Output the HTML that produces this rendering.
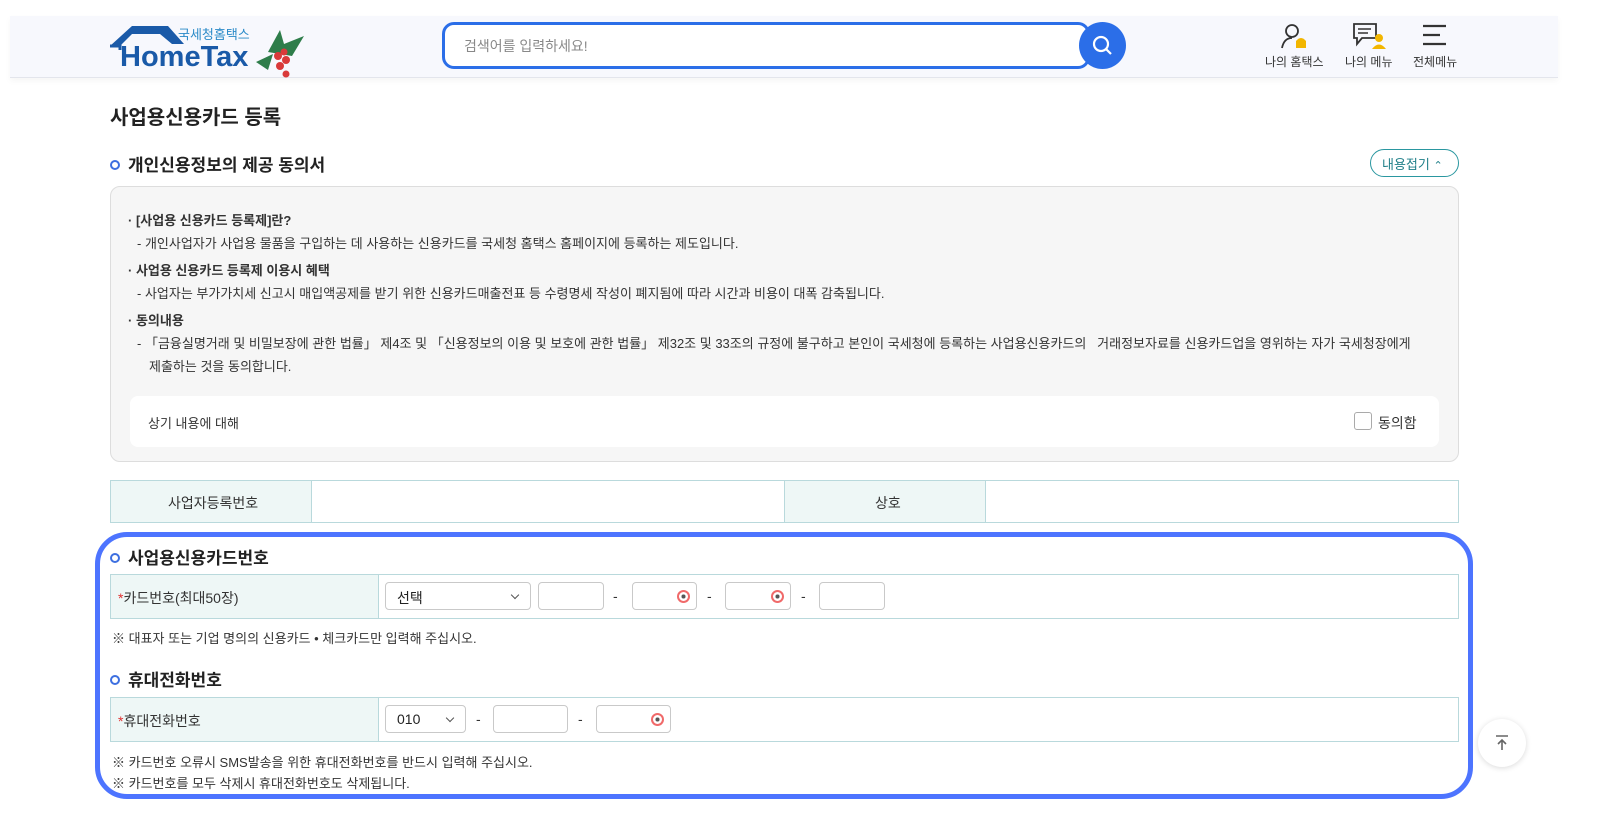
<!DOCTYPE html>
<html><head><meta charset="utf-8">
<style>
*{box-sizing:border-box;margin:0;padding:0}
body{width:1600px;height:830px;background:#fff;font-family:"Liberation Sans","Noto Sans CJK KR",sans-serif;color:#222;position:relative;overflow:hidden}
.a{position:absolute}
.hdr{left:10px;top:16px;width:1548px;height:62px;background:#f7f8fd;border-bottom:1px solid #e3e5ec;box-shadow:0 3px 6px rgba(0,0,0,.04)}
.t{font-size:13px;color:#333;white-space:nowrap}
.b{font-weight:bold}
.inp{position:absolute;height:28px;border:1px solid #c9c9c9;border-radius:4px;background:#fff}
.eye{position:absolute;right:6px;top:7px;width:13px;height:13px;border:2px solid #f06a6a;border-radius:50%;background:radial-gradient(#555 30%,transparent 35%)}
.sel{font-size:14px;padding:5px 0 0 11px}
.sel:after{content:"";position:absolute;right:12px;top:9px;width:5px;height:5px;border-right:1px solid #555;border-bottom:1px solid #555;transform:rotate(45deg)}
.dash{position:absolute;font-size:14px;color:#333}
.bullet{display:inline-block;width:10px;height:10px;border:2.5px solid #3d6fe0;border-radius:50%;margin-right:8px;vertical-align:1px}
</style></head><body>
<div class="a hdr"></div>
<svg class="a" style="left:108px;top:22px" width="200" height="56" viewBox="0 0 200 56">
<path d="M2 24 L24 4 L60 4 L76 22 L64 22 L52 12 L24 12 L12 24 Z" fill="#1a5aa8"/>
<path d="M2 24 L12 24 L12 28" stroke="#1a5aa8" stroke-width="3" fill="none"/>
<text x="12" y="44" font-family="Liberation Sans" font-weight="bold" font-size="29" fill="#1a5aa8">HomeTax</text>
<text x="70" y="17" font-family="Noto Sans CJK KR" font-size="13" fill="#2a8ac8">국세청홈택스</text>
<path d="M160 30 L172 8 L176 22 L196 14 L184 34 Z" fill="#2e7d4a"/>
<path d="M148 40 L165 32 L160 48 Z" fill="#2e7d4a"/>
<circle cx="170" cy="34" r="4" fill="#d93a3a"/><circle cx="178" cy="38" r="4" fill="#d93a3a"/><circle cx="176" cy="30" r="3.5" fill="#d93a3a"/><circle cx="172" cy="44" r="4" fill="#d93a3a"/><circle cx="178" cy="52" r="3.5" fill="#d93a3a"/>
</svg>
<div class="a" style="left:442px;top:22px;width:648px;height:47px;border:3px solid #2b6ee8;border-radius:12px;background:#fff"></div>
<div class="a t" style="left:464px;top:36px;font-size:14px;color:#888">검색어를 입력하세요!</div>
<div class="a" style="left:1079px;top:22px;width:47px;height:47px;border-radius:50%;background:#2b6ee8"></div>
<svg class="a" style="left:1091px;top:34px" width="24" height="24"><circle cx="10" cy="10" r="7" stroke="#fff" stroke-width="2.2" fill="none"/><path d="M15 15 L20 20" stroke="#fff" stroke-width="2.2"/></svg>
<svg class="a" style="left:1280px;top:22px" width="32" height="28"><circle cx="12" cy="9" r="6" stroke="#333" stroke-width="1.8" fill="none"/><path d="M2 26 Q4 16 12 16" stroke="#333" stroke-width="1.8" fill="none"/><path d="M16 26 L16 19 Q21 13 26 19 L26 26 Z" fill="#f2b600"/></svg>
<svg class="a" style="left:1352px;top:22px" width="36" height="28"><path d="M2 2 H24 V16 H10 L5 22 V16 H2 Z" stroke="#333" stroke-width="1.8" fill="none"/><path d="M6 7H19M6 11H16" stroke="#333" stroke-width="1.5"/><circle cx="27" cy="16" r="4" fill="#f2b600"/><path d="M20 27 Q27 18 34 27Z" fill="#f2b600"/></svg>
<svg class="a" style="left:1422px;top:24px" width="26" height="22"><path d="M1 2H24M1 11H18M1 20H24" stroke="#333" stroke-width="2.2"/></svg>
<div class="a t" style="left:1265px;top:53px;font-size:12px">나의 홈택스</div>
<div class="a t" style="left:1345px;top:53px;font-size:12px">나의 메뉴</div>
<div class="a t" style="left:1413px;top:53px;font-size:12px">전체메뉴</div>

<div class="a b" style="left:110px;top:101px;font-size:20px">사업용신용카드 등록</div>
<div class="a b" style="left:110px;top:151px;font-size:17px"><span class="bullet"></span>개인신용정보의 제공 동의서</div>
<div class="a" style="left:1370px;top:149px;width:89px;height:28px;border:1.5px solid #2a97a0;border-radius:14px;font-size:13px;color:#1f7f88;padding:4px 0 0 11px">내용접기 <span style="font-size:11px">⌃</span></div>

<div class="a" style="left:110px;top:186px;width:1349px;height:276px;background:#f6f6f6;border:1px solid #ddd;border-radius:10px"></div>
<div class="a t b" style="left:128px;top:210px">· [사업용 신용카드 등록제]란?</div>
<div class="a t" style="left:137px;top:233px">- 개인사업자가 사업용 물품을 구입하는 데 사용하는 신용카드를 국세청 홈택스 홈페이지에 등록하는 제도입니다.</div>
<div class="a t b" style="left:128px;top:260px">· 사업용 신용카드 등록제 이용시 혜택</div>
<div class="a t" style="left:137px;top:283px">- 사업자는 부가가치세 신고시 매입액공제를 받기 위한 신용카드매출전표 등 수령명세 작성이 폐지됨에 따라 시간과 비용이 대폭 감축됩니다.</div>
<div class="a t b" style="left:128px;top:310px">· 동의내용</div>
<div class="a t" style="left:137px;top:333px">- 「금융실명거래 및 비밀보장에 관한 법률」 제4조 및 「신용정보의 이용 및 보호에 관한 법률」 제32조 및 33조의 규정에 불구하고 본인이 국세청에 등록하는 사업용신용카드의 &nbsp;&nbsp;거래정보자료를 신용카드업을 영위하는 자가 국세청장에게</div>
<div class="a t" style="left:149px;top:356px">제출하는 것을 동의합니다.</div>
<div class="a" style="left:130px;top:396px;width:1309px;height:51px;background:#fff;border-radius:8px"></div>
<div class="a t" style="left:148px;top:413px">상기 내용에 대해</div>
<div class="a" style="left:1354px;top:412px;width:18px;height:18px;border:1.5px solid #aaa;border-radius:3px;background:#fff"></div>
<div class="a t" style="left:1378px;top:413px;font-size:14px">동의함</div>

<div class="a" style="left:110px;top:480px;width:1349px;height:43px;border:1px solid #b9d9dc"></div>
<div class="a" style="left:111px;top:481px;width:201px;height:41px;background:#eef7f6;border-right:1px solid #b9d9dc"></div>
<div class="a" style="left:784px;top:481px;width:202px;height:41px;background:#eef7f6;border-left:1px solid #b9d9dc;border-right:1px solid #b9d9dc"></div>
<div class="a t" style="left:168px;top:493px;font-size:14px">사업자등록번호</div>
<div class="a t" style="left:875px;top:493px;font-size:14px">상호</div>

<div class="a" style="left:95px;top:532px;width:1378px;height:267px;border:5px solid #4d74ff;border-radius:32px"></div>

<div class="a b" style="left:110px;top:544px;font-size:17px"><span class="bullet"></span>사업용신용카드번호</div>
<div class="a" style="left:110px;top:574px;width:1349px;height:45px;border:1px solid #b9d9dc"></div>
<div class="a" style="left:111px;top:575px;width:268px;height:43px;background:#eef7f6;border-right:1px solid #b9d9dc"></div>
<div class="a t" style="left:118px;top:588px;font-size:14px"><span style="color:#e03030">*</span>카드번호(최대50장)</div>
<div class="inp sel" style="left:385px;top:582px;width:146px">선택</div>
<div class="inp" style="left:538px;top:582px;width:66px"></div>
<div class="dash" style="left:613px;top:588px">-</div>
<div class="inp" style="left:632px;top:582px;width:65px"><span class="eye"></span></div>
<div class="dash" style="left:707px;top:588px">-</div>
<div class="inp" style="left:725px;top:582px;width:66px"><span class="eye"></span></div>
<div class="dash" style="left:801px;top:588px">-</div>
<div class="inp" style="left:819px;top:582px;width:66px"></div>
<div class="a t" style="left:112px;top:628px">※ 대표자 또는 기업 명의의 신용카드 • 체크카드만 입력해 주십시오.</div>

<div class="a b" style="left:110px;top:666px;font-size:17px"><span class="bullet"></span>휴대전화번호</div>
<div class="a" style="left:110px;top:697px;width:1349px;height:45px;border:1px solid #b9d9dc"></div>
<div class="a" style="left:111px;top:698px;width:268px;height:43px;background:#eef7f6;border-right:1px solid #b9d9dc"></div>
<div class="a t" style="left:118px;top:711px;font-size:14px"><span style="color:#e03030">*</span>휴대전화번호</div>
<div class="inp sel" style="left:385px;top:705px;width:81px">010</div>
<div class="dash" style="left:476px;top:711px">-</div>
<div class="inp" style="left:493px;top:705px;width:75px"></div>
<div class="dash" style="left:578px;top:711px">-</div>
<div class="inp" style="left:596px;top:705px;width:75px"><span class="eye"></span></div>
<div class="a t" style="left:112px;top:752px">※ 카드번호 오류시 SMS발송을 위한 휴대전화번호를 반드시 입력해 주십시오.</div>
<div class="a t" style="left:112px;top:773px">※ 카드번호를 모두 삭제시 휴대전화번호도 삭제됩니다.</div>

<div class="a" style="left:1478px;top:719px;width:48px;height:48px;border-radius:50%;background:#fff;box-shadow:0 1px 6px rgba(0,0,0,.15)"></div>
<svg class="a" style="left:1492px;top:733px" width="20" height="20"><path d="M4 3H16M10 17V8M6 11L10 7L14 11" stroke="#666" stroke-width="1.6" fill="none"/></svg>
</body></html>
